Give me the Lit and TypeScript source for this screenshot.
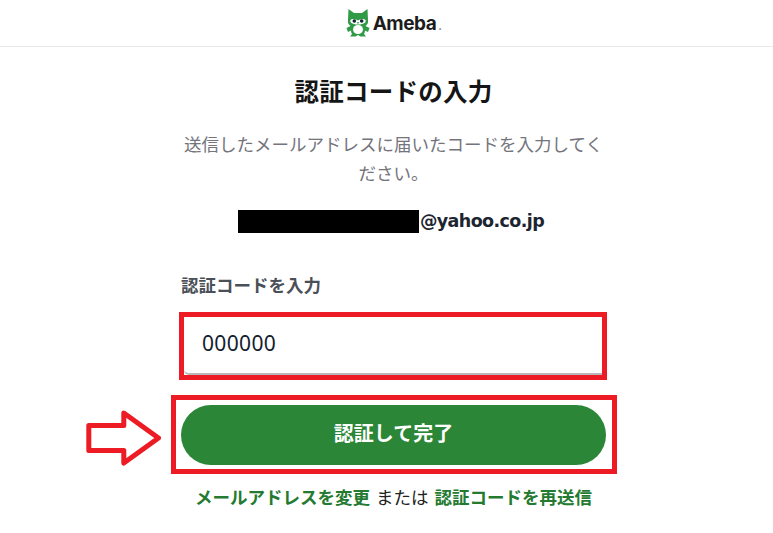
import { LitElement, html, css } from "lit";
import { customElement } from "lit/decorators.js";

const JP = css`"Noto Sans CJK JP", sans-serif`;

@customElement("app-root")
export class AppRoot extends LitElement {
  static styles = css`
    :host { display: block; position: relative; width: 773px; height: 533px; overflow: hidden; background: #fff; font-family: "DejaVu Sans", "Noto Sans CJK JP", sans-serif; }
    .header { height: 47px; box-sizing: border-box; border-bottom: 1px solid #e8e8e8; display: flex; align-items: center; justify-content: center; padding-left: 14px; gap: 3px; }
    .logo-text { font: 700 19px "Inter", sans-serif; color: #1c1c1c; letter-spacing: -0.5px; }
    .logo-dot { font-size: 11px; color: #777; margin-left: 2px; }
    .main { width: 425px; margin-left: 181px; display: flex; flex-direction: column; }
    h1 { margin: 27px 0 0; font: 700 24.5px/34px ${JP}; text-align: center; color: #151515; letter-spacing: 0.25px; }
    .desc { margin: 21px 0 0; font: 400 17.5px/29px ${JP}; color: #74747c; text-align: center; }
    .mail { margin-top: 22px; display: flex; justify-content: center; align-items: center; height: 24px; padding-right: 5px; }
    .mask { width: 181px; height: 23px; background: #000; }
    .addr { font: 700 17.5px/24px "DejaVu Sans", sans-serif; letter-spacing: -0.6px; color: #1c2530; margin-left: 1px; }
    label { margin-top: 40px; font: 700 17.5px/24px ${JP}; color: #4b5058; }
    .field { margin: 17px -1px 0 3px; height: 61px; box-sizing: border-box; border-bottom: 2px solid #b9b9b9; border-radius: 5px; display: flex; align-items: center; padding-left: 18px; font: 400 21px/1 "Noto Sans", sans-serif; letter-spacing: 0.35px; color: #14202c; }
    .btn { margin-top: 30px; height: 60px; border-radius: 30px; background: #2c8637; color: #fff; font: 700 20px/56px ${JP}; text-align: center; }
    .links { margin-top: 16px; text-align: center; font: 400 17.5px/32px ${JP}; color: #222; white-space: nowrap; word-spacing: 2px; }
    .links b { color: #237a30; font-weight: 700; }
    .box { position: absolute; box-sizing: border-box; border: 5px solid #ed1c24; }
    .box-input { left: 179px; top: 312px; width: 428px; height: 68px; }
    .box-btn { left: 171px; top: 395px; width: 446px; height: 79px; }
    .arrow { position: absolute; left: 84px; top: 408px; }
  `;

  render() {
    return html`
      <div class="header">
        <svg width="24" height="28" viewBox="0 0 24 28">
          <path fill="#2f9b47" d="M2.5 0 L8 4 H16 L21.5 0 L22 11 C22.5 13.5 21.5 15.5 19.5 17 L23.5 19 L22 23 L19 21.5 C19 23 18.5 24 18 25 L20 27.5 H14.5 L12 26 L9.5 27.5 H4 L6 25 C5.5 24 5 23 5 21.5 L2 23 L0.5 19 L4.5 17 C2.5 15.5 1.5 13.5 2 11 Z"/>
          <ellipse cx="12" cy="20.5" rx="5" ry="4.6" fill="#fff"/>
          <path fill="#fff" d="M4.5 11 C6 9.5 9 10 12 11.5 C15 10 18 9.5 19.5 11 C20.5 13 18.5 15.5 12 15.5 C5.5 15.5 3.5 13 4.5 11 Z"/>
          <circle cx="8.3" cy="12" r="1.8" fill="#123"/>
          <circle cx="15.7" cy="12" r="1.8" fill="#123"/>
          <path fill="#2f9b47" d="M10.5 13.2 h3 L12 15 Z"/>
        </svg>
        <span class="logo-text">Ameba<span class="logo-dot">.</span></span>
      </div>
      <div class="main">
        <h1>認証コードの入力</h1>
        <p class="desc">送信したメールアドレスに届いたコードを入力してください。</p>
        <div class="mail"><div class="mask"></div><span class="addr">@yahoo.co.jp</span></div>
        <label>認証コードを入力</label>
        <div class="field">000000</div>
        <div class="btn">認証して完了</div>
        <div class="links"><b>メールアドレスを変更</b> または <b>認証コードを再送信</b></div>
      </div>
      <div class="box box-input"></div>
      <div class="box box-btn"></div>
      <svg class="arrow" width="82" height="62" viewBox="0 0 82 62">
        <path d="M4.8 17.5 H 39.8 V 5 L 74.5 30 L 39.8 55 V 42.5 H 4.8 Z" fill="#fff" stroke="#ed1c24" stroke-width="5" stroke-linejoin="round"/>
      </svg>
    `;
  }
}
